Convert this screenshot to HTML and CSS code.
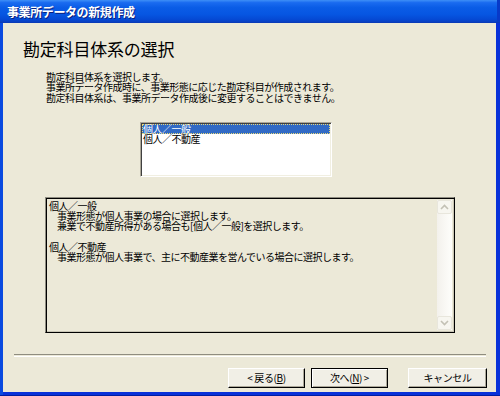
FILE: index.html
```html
<!DOCTYPE html>
<html lang="ja">
<head>
<meta charset="utf-8">
<title>事業所データの新規作成</title>
<link rel="stylesheet" href="styles.css">
</head>
<body>
<div class="window">
  <div class="titlebar"><span class="title">事業所データの新規作成</span></div>
  <div class="frame">
    <div class="content">
      <h1 class="heading">勘定科目体系の選択</h1>
      <div class="intro">
        <div>勘定科目体系を選択します。</div>
        <div>事業所データ作成時に、事業形態に応じた勘定科目が作成されます。</div>
        <div>勘定科目体系は、事業所データ作成後に変更することはできません。</div>
      </div>
      <div class="listbox">
        <div class="item selected">個人／一般</div>
        <div class="item">個人／不動産</div>
      </div>
      <div class="explain">
        <div class="explain-text">
          <div>個人／一般</div>
          <div class="ind">事業形態が個人事業の場合に選択します。</div>
          <div class="ind">兼業で不動産所得がある場合も[個人／一般]を選択します。</div>
          <div class="blank"></div>
          <div>個人／不動産</div>
          <div class="ind">事業形態が個人事業で、主に不動産業を営んでいる場合に選択します。</div>
        </div>
        <div class="scrollbar">
          <div class="sb-btn"><svg width="9" height="6" viewBox="0 0 9 6"><path d="M1 5 L4.5 1.5 L8 5" fill="none" stroke="#C3C1B5" stroke-width="1.6"/></svg></div>
          <div class="sb-track"></div>
          <div class="sb-btn"><svg width="9" height="6" viewBox="0 0 9 6"><path d="M1 1 L4.5 4.5 L8 1" fill="none" stroke="#C3C1B5" stroke-width="1.6"/></svg></div>
        </div>
      </div>
      <div class="separator"></div>
      <div class="buttons">
        <button class="btn">&lt; 戻る(<u>B</u>)</button>
        <button class="btn default">次へ(<u>N</u>) &gt;</button>
        <button class="btn cancel">キャンセル</button>
      </div>
    </div>
  </div>
</div>
</body>
</html>
```
FILE: styles.css
```css
html, body {
  margin: 0;
  padding: 0;
  background: #ECE9D8;
}
body {
  font-family: "Noto Sans CJK JP", "Noto Sans", sans-serif;
  color: #000;
}
.window {
  width: 500px;
  height: 396px;
  display: flex;
  flex-direction: column;
  background: #0831D9;
}
.titlebar {
  height: 22px;
  flex: none;
  border-bottom: 1px solid #0A3BB8;
  background: linear-gradient(to bottom, #3E8FF7 0%, #1A6BF0 12%, #0A5CE6 35%, #0656E2 65%, #0549D4 88%, #0A3FC0 100%);
  display: flex;
  align-items: center;
  padding-left: 7px;
  box-shadow: inset -3px 0 0 #0839C8;
}
.title {
  font-size: 12px;
  font-weight: bold;
  letter-spacing: -0.4px;
  color: #fff;
  text-shadow: 1px 1px 0 #0A2180;
  line-height: 14px;
  margin-top: 1px;
}
.frame {
  flex: 1;
  display: flex;
  padding: 0 4px 4px 3px;
  background: linear-gradient(to right, #0A4AE0 0, #0A4AE0 3px, #0831D9 3px);
  box-shadow: inset 0 -1px 0 #001EA0;
}
.content {
  flex: 1;
  background: #ECE9D8;
  padding-top: 16px;
  display: flex;
  flex-direction: column;
}
.heading {
  margin: 0 0 0 20px;
  font-size: 17px;
  line-height: 20px;
  font-weight: normal;
  letter-spacing: -0.2px;
}
.intro {
  margin: 13px 0 0 43px;
  font-size: 10px;
  line-height: 10.3px;
  letter-spacing: -0.5px;
}
.listbox {
  margin: 19px 0 0 137px;
  width: 188px;
  height: 52px;
  background: #fff;
  border: 1px solid;
  border-color: #ACA899 #fff #fff #ACA899;
  box-shadow: inset 1px 1px 0 #404040, inset -1px -1px 0 #F1EFE2;
  padding: 1px 1px 0 1px;
  font-size: 10px;
  line-height: 10.5px;
  letter-spacing: -0.5px;
}
.item {
  padding-left: 1px;
}
.item.selected {
  background: #316AC5;
  color: #fff;
  outline: 1px dotted #E8D97A;
  outline-offset: -1px;
}
.explain {
  margin: 20px 0 0 42px;
  width: 410px;
  height: 136px;
  box-sizing: border-box;
  border: 1px solid;
  border-color: #8E8C80 #000 #000 #8E8C80;
  box-shadow: inset 1px 1px 0 #000, inset -1px -1px 0 #C9C6B6;
  display: flex;
  padding: 2px 2px 2px 2px;
}
.explain-text {
  flex: 1;
  padding: 1px 0 0 1px;
  font-size: 10px;
  line-height: 10.3px;
  letter-spacing: -0.5px;
}
.ind {
  padding-left: 8px;
}
.blank {
  height: 10.3px;
}
.scrollbar {
  width: 15px;
  display: flex;
  flex-direction: column;
  background: linear-gradient(to right, #F3F1EC, #FEFEFB);
}
.sb-btn {
  height: 14px;
  box-sizing: border-box;
  border: 1px solid #E8E6DC;
  border-radius: 2px;
  background: #F7F6F0;
  display: flex;
  align-items: center;
  justify-content: center;
}
.sb-track {
  flex: 1;
}
.separator {
  margin: 21px 0 0 11px;
  width: 472px;
  height: 1px;
  border-top: 1px solid #8F8D80;
  border-bottom: 1px solid #fff;
}
.buttons {
  margin-top: 11px;
  display: flex;
  justify-content: flex-end;
  padding-right: 9px;
}
.btn {
  width: 77px;
  height: 20px;
  box-sizing: border-box;
  margin: 0;
  padding: 0;
  font-family: "Noto Sans CJK JP", "Noto Sans", sans-serif;
  font-size: 10px;
  line-height: 16px;
  letter-spacing: -0.4px;
  color: #000;
  background: #F1EFE6;
  border: 1px solid;
  border-color: #fff #000 #000 #fff;
  box-shadow: inset -1px -1px 0 #ACA899;
}
.btn u {
  text-decoration: underline;
}
.btn.default {
  margin-left: 6px;
  border-color: #000;
  box-shadow: inset 1px 1px 0 #fff, inset -1px -1px 0 #ACA899;
}
.btn.cancel {
  width: 79px;
  margin-left: 20px;
}
```
